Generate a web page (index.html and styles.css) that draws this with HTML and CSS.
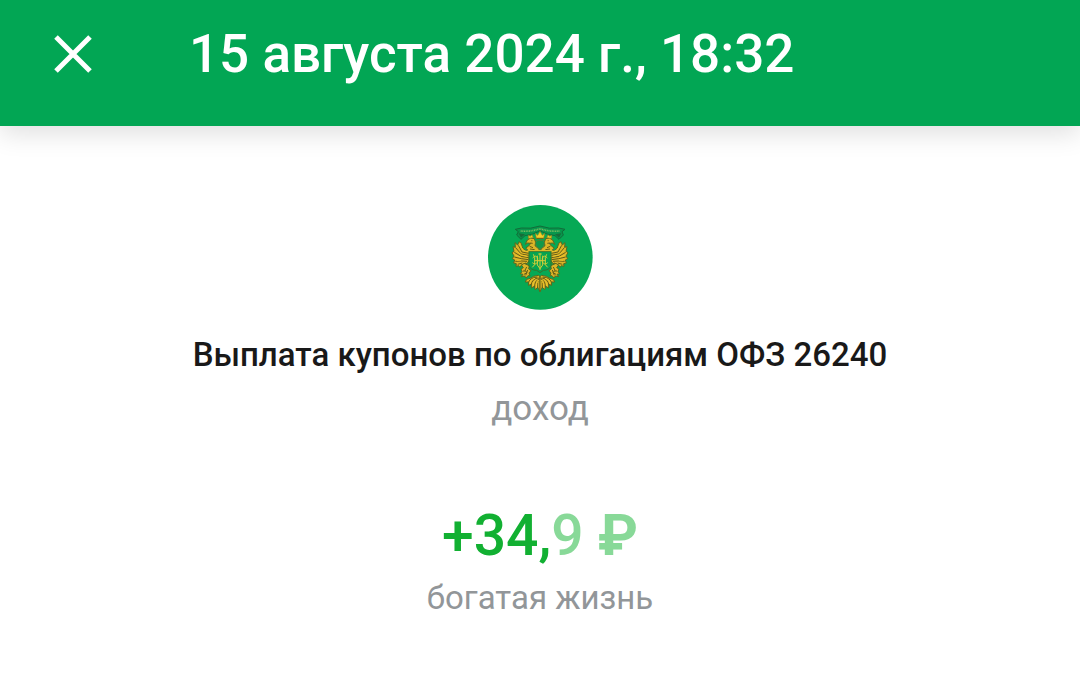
FILE: index.html
```html
<!DOCTYPE html>
<html lang="ru">
<head>
    <meta charset="UTF-8">
    <meta name="viewport" content="width=device-width, initial-scale=1">
    <title>Выплата купонов</title>
    <link rel="stylesheet" href="styles.css">
</head>
<body>
    <header class="header">
        <button class="close" type="button" aria-label="Закрыть">
            <svg viewBox="0 0 38 38" aria-hidden="true">
                <path d="M2 2 36 36M36 2 2 36"/>
            </svg>
        </button>
        <h1 class="date">15 августа 2024 г., 18:32</h1>
    </header>
    <main class="operation">
        <svg class="logo" viewBox="21 21 315 315" aria-hidden="true">
            <defs>
                <g id="half">
                    <!-- wing -->
                    <path class="gold" d="M146 154 134 158 125 150 121 136 114 131 110 141 102 134 103 148 96 146 99 160 93 164 99 174 94 182 101 186 98 195 106 197 105 205 113 203 117 208 122 200 128 203 132 195 138 197 144 188Z"/>
                    <path class="line" d="M112 142 123 162 143 166M104 149 120 168 143 172M100 163 120 175 143 179M100 177 121 182 142 185M103 190 121 189 138 190M110 199 124 195"/>
                    <path class="shine" d="M116 140 127 158 141 161M106 159 122 171 138 175M103 172 120 178M107 187 120 186"/>
                    <!-- head and neck -->
                    <path class="gold" d="M143 159 134 150 143 144 149 136 140 135 133 139 139 126 149 120 160 122 164 133 162 143 174 153 174 159Z"/>
                    <path class="line" d="M148 135 155 136M146 145 156 149M151 128h3M147 153 161 155"/>
                    <path class="crown" d="M142 121 142 112 148 115 153 110 157 119Z"/>
                    <!-- leg -->
                    <path class="gold" d="M138 200 129 196 122 202 127 209 120 213 123 221 118 227 126 229 121 236 131 234 135 240 141 233 147 234 144 225 150 218 143 213 145 203Z"/>
                    <path class="line" d="M137 207 132 217 138 224 129 229M140 216 134 232M126 219h8"/>
                    <!-- tail -->
                    <path class="gold" d="M172 232 158 235 148 241 137 244 133 252 143 252 142 262 151 259 151 270 160 265 163 275 170 268 177 281V236Z"/>
                    <path class="line" d="M169 237Q148 239 143 252M170 240Q153 243 150 262M173 239Q160 250 161 268M175 239Q168 252 170 270"/>
                    <path class="shine" d="M162 241Q148 244 147 256M169 243Q155 252 156 264M173 246Q165 254 166 269"/>
                </g>
            </defs>
            <circle cx="178" cy="178" r="157" fill="#06a955"/>
            <!-- ribbon -->
            <path class="ribbon" d="M103 94 121 90Q149 94 177 84Q205 94 233 90L252 94 243 101 247 111 234 124 222 113Q199 111 177 99Q155 111 132 113L120 124 107 111 112 101Z"/>
            <path class="letters" d="M119 99Q149 102 177 92Q205 102 236 99"/>
            <path class="fold" d="M113 106 132 109 120 119ZM241 106 222 109 234 119Z"/>
            <use href="#half"/>
            <use href="#half" transform="matrix(-1 0 0 1 354 0)"/>
            <!-- crown -->
            <path class="crown" d="M166 122 163 106 170 112 177 100 184 112 191 106 188 122Z"/>
            <path class="line" d="M166 121h22"/>
            <path class="neck" d="M169 127h16l6 7-4 13-10 7-10-7-4-13z"/>
            <!-- shield with monogram -->
            <path class="shield" d="M144 160Q160 162 177 160Q194 162 210 160V204Q204 217 187 217L177 224 167 217Q150 217 144 204Z"/>
            <path class="shine" d="M140 158h74"/>
            <path class="sign" d="M157 169 161 178 161 200 154 208M197 169 193 178 193 200 200 208M177 166V216M169 173V201L177 212 185 201V173M155 180Q164 169 170 180V192Q163 203 154 194M199 180Q190 169 184 180V192Q191 203 200 194M161 188h32M172 168h10"/>
        </svg>
        <h2 class="title">Выплата купонов по облигациям ОФЗ 26240</h2>
        <p class="kind">доход</p>
        <p class="amount">+34,<span class="fraction">9 <span class="currency">₽</span></span></p>
        <p class="note">богатая жизнь</p>
    </main>
</body>
</html>
```

FILE: styles.css
```css
* { box-sizing: border-box; }
body { margin: 0; font-family: Roboto, "Noto Sans", sans-serif; background: #fff; color: #191919; }
h1, h2, p { margin: 0; font-weight: 400; }

.header {
    display: flex; align-items: center; gap: 97px;
    padding: 22px 54px 40px;
    background: #02a654; color: #fff;
    box-shadow: 0 8px 24px rgba(0, 0, 0, 0.12);
}
.close { display: flex; padding: 0; border: none; background: none; color: inherit; cursor: pointer; }
.close svg { width: 38px; height: 38px; fill: none; stroke: currentColor; stroke-width: 5; }
.date { font-size: 53px; line-height: 64px; font-weight: 500; }

.operation { display: flex; flex-direction: column; align-items: center; padding: 79px 24px 48px; text-align: center; }
.logo { width: 105px; height: 105px; }
.title { margin-top: 21px; font-size: 33px; line-height: 48px; font-weight: 500; }
.kind { margin-top: 6px; font-size: 35px; line-height: 48px; color: #929699; }
.amount { margin-top: 71px; font-size: 57px; line-height: 64px; font-weight: 500; color: #12b032; }
.fraction { color: #88d998; }
.currency { font-weight: 700; }
.note { margin-top: 6px; font-size: 33px; line-height: 48px; color: #929699; }

/* emblem */
.gold { fill: #dcb527; stroke: #5c681e; stroke-width: 3; }
.line { fill: none; stroke: #655c17; stroke-width: 3; }
.shine { fill: none; stroke: #edc52c; stroke-width: 3; }
.crown { fill: #f1d12a; stroke: #8c7b1d; stroke-width: 2; }
.ribbon { fill: #08964c; stroke: #126b39; stroke-width: 3; }
.letters { fill: none; stroke: #78bd62; stroke-width: 5; stroke-dasharray: 3 2; }
.fold { fill: #176c39; }
.neck { fill: #12984a; stroke: #73752a; stroke-width: 2; }
.shield { fill: #06a451; stroke: #33742e; stroke-width: 3; }
.sign { fill: none; stroke: #d4ce37; stroke-width: 3; }
```
